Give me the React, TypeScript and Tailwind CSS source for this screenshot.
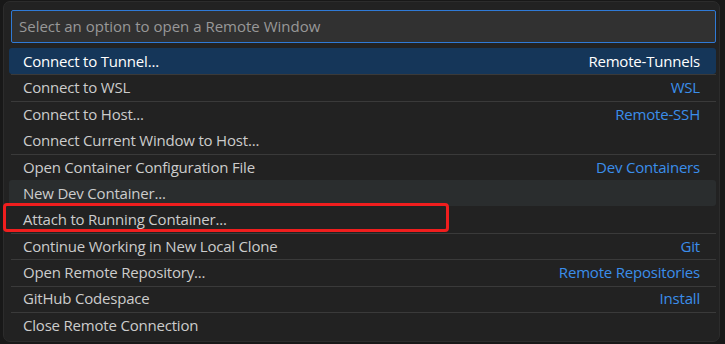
import React from 'react';

type Item = { label: string; detail?: string; sep?: boolean };

const items: Item[] = [
  { label: 'Connect to Tunnel...', detail: 'Remote-Tunnels' },
  { label: 'Connect to WSL', detail: 'WSL', sep: true },
  { label: 'Connect to Host...', detail: 'Remote-SSH', sep: true },
  { label: 'Connect Current Window to Host...' },
  { label: 'Open Container Configuration File', detail: 'Dev Containers', sep: true },
  { label: 'New Dev Container...' },
  { label: 'Attach to Running Container...' },
  { label: 'Continue Working in New Local Clone', detail: 'Git', sep: true },
  { label: 'Open Remote Repository...', detail: 'Remote Repositories', sep: true },
  { label: 'GitHub Codespace', detail: 'Install', sep: true },
  { label: 'Close Remote Connection', sep: true },
];

const App: React.FC = () => {
  return (
    <div
      className="w-[725px] h-[344px] bg-[#181818] pl-[3px] pt-[1px] overflow-hidden relative"
      style={{ fontFamily: '"Open Sans", "Noto Sans", sans-serif' }}
    >
      {/* Quick pick panel */}
      <div className="w-[717px] h-[341px] bg-[#222222] rounded-[7px] border border-[#2c2c2c] pt-[8px] overflow-hidden">
        <div className="ml-[7px] mr-[3px] h-[33px] bg-[#313131] border border-[#2f7ad6] rounded-[2px] flex items-center pl-[7px]">
          <span className="text-[15px] text-[#989898]">Select an option to open a Remote Window</span>
        </div>
        <div className="mt-[5px] ml-[5px] mr-[3px]">
          {items.map((item, i) => {
            const selected = i === 0;
            const hovered = i === 5;
            return (
              <div
                key={item.label}
                className={
                  'h-[26.4px] relative flex items-center justify-between pl-[14px] pr-[16px] rounded-[3px] text-[15px] tracking-[-0.2px] ' +
                  (selected ? 'bg-[#153659] text-white' : hovered ? 'bg-[#2a2d2e] text-[#cccccc]' : 'text-[#cccccc]')
                }
              >
                {item.sep && <div className="absolute left-[2px] right-0 top-0 h-px bg-[#3a3a3a]" />}
                <span>{item.label}</span>
                {item.detail && (
                  <span className={selected ? 'text-white' : 'text-[#3b8eea]'}>{item.detail}</span>
                )}
              </div>
            );
          })}
        </div>
      </div>
      {/* annotation box */}
      <div className="absolute left-[3px] top-[203px] w-[446px] h-[29px] border-[3px] border-[#f01e1e] rounded-[4px]" />
    </div>
  );
};

export default App;
